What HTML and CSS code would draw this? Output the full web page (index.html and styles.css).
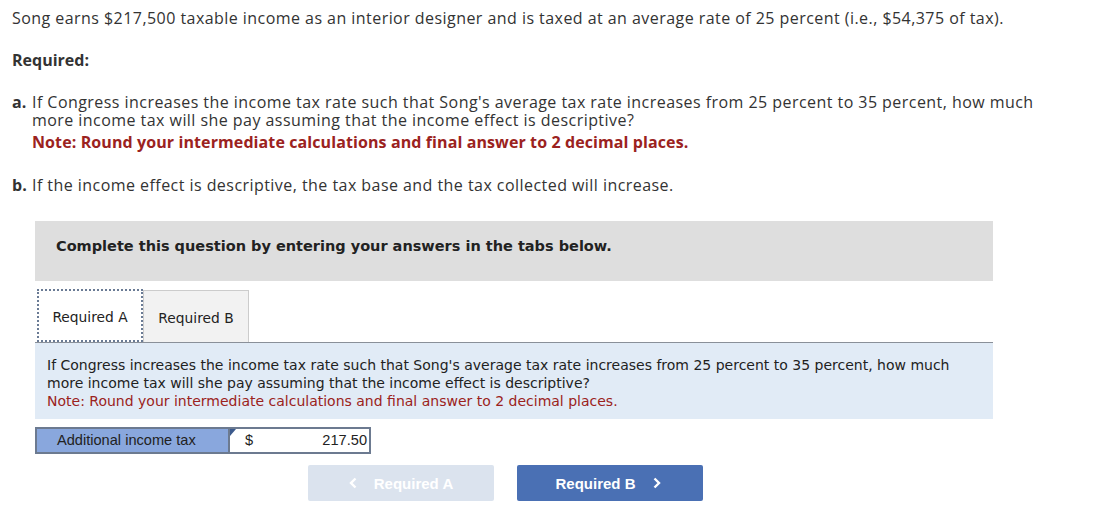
FILE: index.html
```
<!DOCTYPE html>
<html>
<head>
<meta charset="utf-8">
<link rel="stylesheet" href="styles.css">
</head>
<body>
<div class="page">
  <p class="intro">Song earns $217,500 taxable income as an interior designer and is taxed at an average rate of 25 percent (i.e., $54,375 of tax).</p>
  <p class="req">Required:</p>
  <div class="item">
    <span class="lbl">a.</span>
    <div class="itxt">If Congress increases the income tax rate such that Song's average tax rate increases from 25 percent to 35 percent, how much more income tax will she pay assuming that the income effect is descriptive?<div class="note">Note: Round your intermediate calculations and final answer to 2 decimal places.</div></div>
  </div>
  <div class="item item-b">
    <span class="lbl">b.</span>
    <div class="itxt">If the income effect is descriptive, the tax base and the tax collected will increase.</div>
  </div>

  <div class="widget">
    <div class="banner">Complete this question by entering your answers in the tabs below.</div>
    <div class="tabs">
      <div class="tab active">Required A</div>
      <div class="tab">Required B</div>
    </div>
    <div class="panel">
      If Congress increases the income tax rate such that Song's average tax rate increases from 25 percent to 35 percent, how much more income tax will she pay assuming that the income effect is descriptive?<br>
      <span class="pnote">Note: Round your intermediate calculations and final answer to 2 decimal places.</span>
    </div>
    <div class="answer">
      <div class="alabel">Additional income tax</div>
      <div class="ainput"><span class="cur">$</span><span class="val">217.50</span></div>
    </div>
    <div class="nav">
      <button class="btn prev"><svg class="chev" width="8" height="12" viewBox="0 0 8 12"><path d="M6.5 1.5 L2 6 L6.5 10.5" fill="none" stroke="currentColor" stroke-width="2.4"/></svg><span>Required A</span></button>
      <button class="btn next"><span>Required B</span><svg class="chev" width="8" height="12" viewBox="0 0 8 12"><path d="M1.5 1.5 L6 6 L1.5 10.5" fill="none" stroke="currentColor" stroke-width="2.4"/></svg></button>
    </div>
  </div>
</div>
</body>
</html>
```
FILE: styles.css
```
html, body { margin: 0; padding: 0; background: #fff; }
.page {
  padding: 9px 0 0 12px;
  font-family: "Open Sans", "Liberation Sans", sans-serif;
  font-size: 16px;
  letter-spacing: 0.45px;
  color: #333;
}
p { margin: 0; }
.intro { line-height: 18px; }
.req { font-weight: 700; letter-spacing: 0; margin-top: 24px; line-height: 18px; }
.item { display: flex; margin-top: 24px; line-height: 18px; width: 1040px; }
.item-b { margin-top: 25px; }
.lbl { font-weight: 700; letter-spacing: 0; width: 20px; flex: none; }
.note { color: #9b2220; font-weight: 700; letter-spacing: 0.1px; margin-top: 4px; }

.widget { margin: 27px 0 0 23px; width: 958px; letter-spacing: 0; }
.banner {
  background: #dedede;
  height: 60px;
  box-sizing: border-box;
  padding: 17px 0 0 21px;
  font-family: "DejaVu Sans", Verdana, sans-serif;
  font-weight: 700;
  font-size: 14.5px;
  color: #222;
}
.tabs { display: flex; margin-top: 8px; padding-left: 2px; height: 53px; }
.tab {
  box-sizing: border-box;
  width: 106px;
  height: 53px;
  font-family: "DejaVu Sans", Verdana, sans-serif;
  font-size: 13.8px;
  color: #222;
  display: flex;
  align-items: center;
  justify-content: center;
  padding-top: 2px;
}
.tab.active { border: 2px dotted #6a7b95; background: #fff; }
.tab:not(.active) { background: #f2f2f2; border: 1px solid #ccc; border-bottom: none; margin-top: 1px; height: 52px; }
.panel {
  border-top: 1px solid #8a9099;
  background: #e1ebf6;
  padding: 13px 12px 9px 12px;
  font-family: "DejaVu Sans", Verdana, sans-serif;
  font-size: 14px;
  line-height: 18px;
  color: #222;
}
.pnote { color: #9b2220; }
.answer {
  display: flex;
  margin-top: 8px;
  width: 336px;
  height: 27px;
  box-sizing: border-box;
  border: 2px solid #6c7a90;
  font-family: "Liberation Sans", Arial, sans-serif;
  font-size: 14.6px;
  color: #222;
}
.alabel {
  width: 193px;
  background: #89a7dd;
  padding-left: 20px;
  box-sizing: border-box;
  line-height: 23px;
  border-right: 2px solid #6c7a90;
}
.ainput {
  position: relative;
  flex: 1;
  background: #fff;
  display: flex;
  justify-content: space-between;
  padding: 0 2px 0 15px;
  line-height: 23px;
}
.ainput::before {
  content: "";
  position: absolute;
  left: 0; top: 0;
  border-top: 7px solid #3c5a8c;
  border-right: 6px solid transparent;
}
.nav { display: flex; margin: 11px 0 0 273px; gap: 23px; }
.btn {
  width: 186px;
  height: 36px;
  border: none;
  border-radius: 2px;
  font-family: "Liberation Sans", Arial, sans-serif;
  font-weight: 700;
  font-size: 15px;
  color: #fff;
  display: flex;
  align-items: center;
  justify-content: center;
  gap: 17px;
  padding: 0;
}
.btn.prev { background: #dbe3ee; }
.btn.next { background: #4a70b4; padding-right: 4px; }
.chev { display: block; }
```
